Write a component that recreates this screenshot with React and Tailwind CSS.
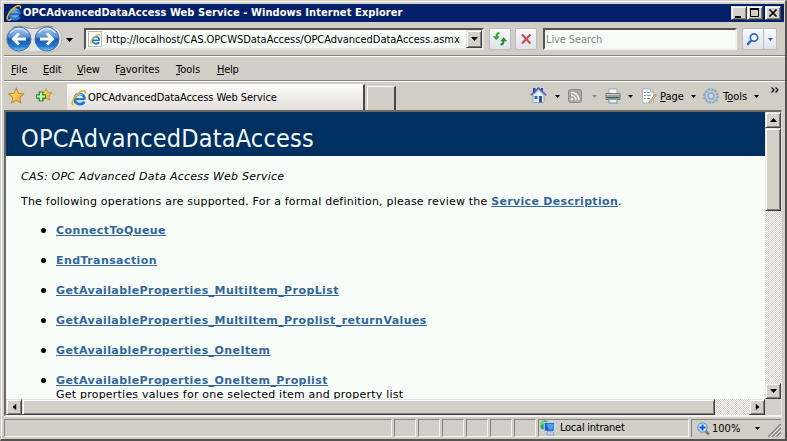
import React from "react";

const ui = "font-['DejaVu_Sans_Condensed','DejaVu_Sans',sans-serif] [font-stretch:condensed]";
const raised =
  "bg-[#d3d0c8] border border-t-[#e4e2dc] border-l-[#e4e2dc] border-r-[#404040] border-b-[#404040] shadow-[inset_1px_1px_0_#fff,inset_-1px_-1px_0_#808080]";
const dither = "bg-[repeating-conic-gradient(#fff_0_25%,#d4d0c8_0_50%)] bg-[length:2px_2px]";

function IELogo({ size = 16, className = "" }) {
  return (
    <svg width={size} height={size} viewBox="0 0 16 16" className={"shrink-0 " + className}>
      <circle cx="8.600" cy="9" r="4.700" fill="#d8f0ff" opacity=".6" />
      <path d="M4 9.200h9.400" stroke="#1769c8" strokeWidth="1.900" />
      <path d="M13.300 11.600C11.600 14.900 6.200 15 4.300 11.800C2.400 8.200 4.600 4 8.700 4C11.800 4 13.500 6.100 13.400 9.400" fill="none" stroke="#1d78d8" strokeWidth="2.700" />
      <path d="M4.600 6.800C5.800 4.400 9 3.300 11.500 4.800" fill="none" stroke="#6cc4ff" strokeWidth="1.200" />
      <path d="M2.200 14.800C-.6 12.800 4 4.600 9.600 1.700C12.600 .1 15.200.2 14.200 3.600" fill="none" stroke="#e9b320" strokeWidth="1.600" />
      <path d="M2.200 14.800C3.200 15.400 4.400 14.800 5.400 14" fill="none" stroke="#f7dc6a" strokeWidth="1.200" />
    </svg>
  );
}

function Caret({ className = "", color = "#000", w = 5 }) {
  return (
    <svg width={w} height={(w + 1) / 2} viewBox="0 0 10 6" preserveAspectRatio="none" className={"shrink-0 " + className}>
      <path d="M0 0h10L5 6z" fill={color} />
    </svg>
  );
}

function NavButtons() {
  return (
    <svg width="60" height="30" viewBox="0 0 60 30" className="shrink-0">
      <defs>
        <linearGradient id="orb" x1="0" y1="0" x2="0" y2="1">
          <stop offset="0" stopColor="#b4cfee" />
          <stop offset=".42" stopColor="#5590d8" />
          <stop offset=".5" stopColor="#165ab0" />
          <stop offset=".8" stopColor="#2478d0" />
          <stop offset="1" stopColor="#74d0fa" />
        </linearGradient>
      </defs>
      <rect x="1" y="1" width="56" height="26" rx="13" fill="#e2e1df" stroke="#b9babb" />
      <path d="M8 2q6-1.500 12 0q8 3 16 0q6-1.500 12 0" fill="none" stroke="#8d8f92" strokeWidth="1.200" />
      {[14, 42].map((x) => (
        <g key={x}>
          <circle cx={x} cy="14" r="12" fill="url(#orb)" stroke="#4a70a2" strokeWidth="1" />
          <path d={`M${x - 9} 8Q${x} -1 ${x + 9} 8`} fill="none" stroke="#e3eefa" strokeWidth="1.200" opacity=".8" />
        </g>
      ))}
      <path d="M21 14H9M14 8.500L8.500 14L14 19.500" fill="none" stroke="#fff" strokeWidth="3" />
      <path d="M35 14h12M42 8.500L47.500 14L42 19.500" fill="none" stroke="#fff" strokeWidth="3" />
    </svg>
  );
}

function TitleBar() {
  return (
    <div className="h-[18px] bg-[#04206a] flex items-center pl-[2px] pr-[3px] mr-[1px]">
      <IELogo />
      <span className="ml-[1px] text-white font-bold text-[11px] leading-[18px] whitespace-nowrap tracking-[0.08px]">
        OPCAdvancedDataAccess Web Service - Windows Internet Explorer
      </span>
      <div className="ml-auto flex">
        <div className={"w-4 h-[14px] " + raised}>
          <svg width="14" height="12"><path d="M3 9h6v2H3z" /></svg>
        </div>
        <div className={"w-4 h-[14px] " + raised}>
          <svg width="14" height="12"><path d="M2.500 2.500h8v7h-8z" fill="none" stroke="#000" /><path d="M2 1h9v2H2z" /></svg>
        </div>
        <div className={"ml-[2px] w-4 h-[14px] " + raised}>
          <svg width="14" height="12"><path d="M3.500 2.500l7 7M10.500 2.500l-7 7" stroke="#000" strokeWidth="1.700" /></svg>
        </div>
      </div>
    </div>
  );
}

const glass =
  "border border-[#b9bcc2] rounded-[2px] bg-gradient-to-b from-[#fbfbfc] via-[#eceef2] to-[#dfe3ea] flex items-center justify-center";

function AddressRow() {
  return (
    <div className="h-[33px] flex items-start text-[11px]">
      <div className="pl-[1px] pt-[3px]"><NavButtons /></div>
      <Caret w={7} className="mt-[16px] ml-[1px]" />
      <div className="ml-[11px] mt-[6px] w-[400px] h-[22px] border-2 border-t-[#55534e] border-l-[#55534e] border-r-[#e8e6e0] border-b-[#e8e6e0] bg-[#f8fdf9] flex items-center">
        <div className="ml-[2px] w-[14px] h-[16px] border border-[#b9b9b0] bg-white flex items-center justify-center"><IELogo size={11} /></div>
        <span className="ml-[4px] pt-[1px] leading-4 tracking-[-0.03px] whitespace-nowrap text-black">http://localhost/CAS.OPCWSDataAccess/OPCAdvancedDataAccess.asmx</span>
        <div className={"ml-auto shrink-0 w-4 h-[18px] flex items-center justify-center " + raised}><Caret w={7} /></div>
      </div>
      <div className={"ml-[5px] mt-[6px] w-[22px] h-[22px] " + glass}>
        <svg width="16" height="16" viewBox="0 0 16 16">
          <path d="M7.500 2Q4.500 2 4.500 6" fill="none" stroke="#35a23a" strokeWidth="2" />
          <path d="M.8 5.200h7L4.300 9.300z" fill="#35a23a" />
          <path d="M8.500 13.500Q11.500 13.500 11.500 10" fill="none" stroke="#258a2b" strokeWidth="2" />
          <path d="M8.200 10.300h7L11.700 6.200z" fill="#258a2b" />
        </svg>
      </div>
      <div className={"ml-[4px] mt-[6px] w-[22px] h-[22px] " + glass}>
        <svg width="12" height="12" viewBox="0 0 12 12"><path d="M2 1.500l8.500 9M10.500 1.500L2 10.500" stroke="#cc4d55" strokeWidth="2.200" /></svg>
      </div>
      <div className="ml-[6px] mt-[6px] w-[194px] h-[22px] border-2 border-t-[#55534e] border-l-[#55534e] border-r-[#f4f3f0] border-b-[#f4f3f0] bg-[#f8fdf9] flex items-center">
        <span className="ml-[1px] pt-[1px] leading-4 tracking-[-0.1px] text-[#858585]">Live Search</span>
      </div>
      <div className={"ml-[5px] mt-[6px] w-[35px] h-[22px] " + glass}>
        <div className="w-[21px] h-full flex items-center justify-center border-r border-[#b9bcc2]">
          <svg width="14" height="14" viewBox="0 0 14 14">
            <path d="M5.500 8L2 12" stroke="#2c63cf" strokeWidth="2.400" strokeLinecap="round" />
            <circle cx="8" cy="5.500" r="3.700" fill="#eef5ff" stroke="#2c63cf" strokeWidth="1.700" />
          </svg>
        </div>
        <div className="flex-1 flex justify-center"><Caret color="#2c63c0" /></div>
      </div>
    </div>
  );
}

function MenuBar() {
  return (
    <div className="h-[25px] border-t border-[#868480] shadow-[inset_0_1px_0_#fff] text-[11px] leading-[27px] flex text-black">
      <span className="ml-[7px] w-[32px]"><u>F</u>ile</span>
      <span className="w-[34px] tracking-[-0.2px]"><u>E</u>dit</span>
      <span className="w-[38px] tracking-[-0.2px]"><u>V</u>iew</span>
      <span className="w-[61px]">F<u>a</u>vorites</span>
      <span className="w-[41px]"><u>T</u>ools</span>
      <span className="tracking-[-0.3px]"><u>H</u>elp</span>
    </div>
  );
}

const star = "M8 .8l2.100 4.700 5.100.6-3.700 3.600.9 5.200L8 12.400l-4.400 2.500.9-5.200L.8 6.100l5.100-.6z";

function Star({ plus }) {
  return (
    <svg width="17" height="17" viewBox="0 0 17 17" className="shrink-0">
      <defs>
        <linearGradient id="gold" x1="0" y1="0" x2="1" y2="1">
          <stop offset="0" stopColor="#ffe98a" />
          <stop offset="1" stopColor="#f3a31c" />
        </linearGradient>
      </defs>
      <path d={star} fill="url(#gold)" stroke="#b98a3a" strokeWidth="1" transform={plus ? "translate(3.500 1) scale(.82)" : "translate(0 .5) scale(1.03)"} />
      {plus && (
        <g>
          <path d="M5 4.500v10M0 9.500h10" stroke="#238a2b" strokeWidth="4.600" />
          <path d="M5 5.500v8M1 9.500h8" stroke="#c8f7b0" strokeWidth="2.200" />
        </g>
      )}
    </svg>
  );
}

function Home() {
  return (
    <svg width="17" height="16" viewBox="0 0 17 16" className="shrink-0">
      <path d="M3 1h2.500v5H3zM11 1h2v3h-2z" fill="#33439f" />
      <path d="M3 8L8.500 3L14 8v7.500H3z" fill="#e3effb" stroke="#8aa6c8" />
      <path d="M.7 8.300L8.500 1L16.300 8.300" fill="none" stroke="#4660b6" strokeWidth="1.500" />
      <path d="M4.500 9h3v3h-3z" fill="#3d6699" /><path d="M9 9h3v6.500H9z" fill="#2c598f" />
    </svg>
  );
}
function Feed() {
  return (
    <svg width="14" height="14" viewBox="0 0 14 14" className="shrink-0">
      <rect x=".5" y=".5" width="13" height="13" rx="2" fill="#a6a6a4" stroke="#8c8c8a" />
      <circle cx="4" cy="10.200" r="1.200" fill="#f3f3f1" />
      <path d="M3 6.300a5 5 0 015 5M3 3.200a8 8 0 018 8" fill="none" stroke="#f3f3f1" strokeWidth="1.500" />
    </svg>
  );
}
function Printer() {
  return (
    <svg width="16" height="16" viewBox="0 0 16 16" className="shrink-0">
      <path d="M4 .8h8v6H4z" fill="#f3f5f6" stroke="#a3a8ab" />
      <path d="M1 5.500h14v6H1z" fill="#9a9ea1" stroke="#74797c" />
      <path d="M1.500 6.500h13" stroke="#c5c9cb" /><path d="M2 9.500h12" stroke="#53575a" />
      <path d="M4 10.500h8v4.500H4z" fill="#e6f4f0" stroke="#7e8c8c" /><path d="M4.500 11.500h7" stroke="#58bcb0" />
    </svg>
  );
}
function PageIcon() {
  return (
    <svg width="16" height="16" viewBox="0 0 16 16" className="shrink-0">
      <path d="M1.500 1h8l3 3v11h-11z" fill="#fbfcfe" stroke="#a9b1bc" />
      <path d="M9.500 1v3h3" fill="none" stroke="#a9b1bc" />
      <path d="M3 4.500h2M6 4.500h3M3 7.500h2M6 7.500h4M3 10.500h2M6 10.500h3" stroke="#86a2c8" />
      <path d="M14.500 6L9 12.500l-1 2.300 2.200-1L15.500 7z" fill="#e6cd78" stroke="#a08c4c" strokeWidth=".8" />
    </svg>
  );
}
function Gear() {
  return (
    <svg width="16" height="16" viewBox="0 0 16 16" className="shrink-0">
      <circle cx="8" cy="8" r="6.900" fill="none" stroke="#86a0b8" strokeWidth="1.800" strokeDasharray="2.400 1.210" />
      <circle cx="8" cy="8" r="4.600" fill="none" stroke="#9fb8cd" strokeWidth="3.600" />
      <circle cx="8" cy="8" r="2.700" fill="#d5d6d3" stroke="#7d97ae" strokeWidth=".8" />
      <circle cx="8" cy="8" r="4.700" fill="none" stroke="#c3d6e4" strokeWidth=".9" />
    </svg>
  );
}

function TabRow() {
  return (
    <div className="h-[30px] border-t border-[#868480] shadow-[inset_0_1px_0_#fff] flex items-start text-[11px] text-black">
      <div className="mt-[6px] ml-[4px]"><Star /></div>
      <div className="mt-[6px] ml-[11px]"><Star plus /></div>
      <div className="ml-[14px] mt-[3px] w-[298px] h-[26px] bg-gradient-to-b from-[#fbfbfa] to-[#e2e0db] border-r-2 border-[#4b4a47] border-t border-t-white flex items-center">
        <IELogo className="ml-[4px]" />
        <span className="ml-[1px] pt-[2px] tracking-[-0.08px] whitespace-nowrap">OPCAdvancedDataAccess Web Service</span>
      </div>
      <div className="ml-[2px] mt-[5px] w-[29px] h-[24px] border border-b-0 border-t-white border-l-white border-r-[#4b4a47] border-r-2 rounded-tl-[1px]" />
      <div className="ml-[134px] mt-[6px]"><Home /></div>
      <Caret className="mt-[14px] ml-[8px]" />
      <div className="mt-[8px] ml-[8px]"><Feed /></div>
      <Caret className="mt-[14px] ml-[10px]" color="#8b8984" />
      <div className="mt-[7px] ml-[8px]"><Printer /></div>
      <Caret className="mt-[14px] ml-[7px]" />
      <div className="mt-[7px] ml-[8px]"><PageIcon /></div>
      <span className="ml-[3px] mt-[6px] w-[25px] whitespace-nowrap leading-[19px]"><u>P</u>age</span>
      <Caret className="mt-[14px] ml-[6px]" />
      <div className="mt-[7px] ml-[7px]"><Gear /></div>
      <span className="ml-[4px] mt-[6px] w-[25px] whitespace-nowrap leading-[19px]">T<u>o</u>ols</span>
      <Caret className="mt-[14px] ml-[6px]" />
      <svg width="8" height="6" viewBox="0 0 8 6" className="mt-[6px] ml-[12px] shrink-0">
        <path d="M.5.500L3 3L.5 5.500M4.500.500L7 3L4.500 5.500" fill="none" stroke="#000" strokeWidth="1.300" />
      </svg>
    </div>
  );
}

const operations = [
  { name: "ConnectToQueue" },
  { name: "EndTransaction" },
  { name: "GetAvailableProperties_MultiItem_PropList" },
  { name: "GetAvailableProperties_MultiItem_Proplist_returnValues" },
  { name: "GetAvailableProperties_OneItem" },
  {
    name: "GetAvailableProperties_OneItem_Proplist",
    note: "Get properties values for one selected item and property list",
  },
];

function Document() {
  return (
    <div className="flex-1 h-[287px] overflow-hidden bg-[#f8fdf9] font-['DejaVu_Sans',sans-serif] [font-stretch:normal] text-black">
      <div className="h-[44px] bg-[#003060] pl-[15px] pt-[11px] text-[#f4fbff] text-[25px] leading-[32px] tracking-[0.2px] whitespace-nowrap font-['DejaVu_Sans_Condensed','DejaVu_Sans',sans-serif] [font-stretch:condensed]">
        OPCAdvancedDataAccess
      </div>
      <p className="ml-[15px] mt-[13px] text-[11px] leading-[16px] italic whitespace-nowrap tracking-[0.23px]">CAS: OPC Advanced Data Access Web Service</p>
      <p className="ml-[15px] mt-[9px] text-[11px] leading-[16px] whitespace-nowrap tracking-[0.21px]">
        The following operations are supported. For a formal definition, please review the{" "}
        <b className="text-[#336699] underline tracking-[0.32px]">Service Description</b>.
      </p>
      <ul className="mt-[13px] ml-[35px]">
        {operations.map(({ name, note }) => (
          <li key={name} className="h-[30px] flex items-start">
            <i className="block w-[5px] h-[5px] rounded-full bg-black mt-[5px] mr-[10px]" />
            <div className="text-[11px] leading-[14px] pt-[1px] whitespace-nowrap tracking-[0.22px]">
              <b className="text-[#336699] underline tracking-[0.42px]">{name}</b>
              {note && <div>{note}</div>}
            </div>
          </li>
        ))}
      </ul>
    </div>
  );
}

function VScroll() {
  return (
    <div className={"w-4 h-[287px] flex flex-col " + dither}>
      <div className={"h-4 flex items-center justify-center " + raised}><Caret w={7} className="rotate-180" /></div>
      <div className={"h-[83px] " + raised} />
      <div className={"mt-auto h-4 flex items-center justify-center " + raised}><Caret w={7} /></div>
    </div>
  );
}
function HScroll() {
  return (
    <div className="h-4 flex bg-[#d3d0c8]">
      <div className={"w-[759px] flex " + dither}>
        <div className={"w-4 flex items-center justify-center " + raised}><Caret w={7} className="rotate-90" /></div>
        <div className={"w-[693px] " + raised} />
        <div className={"ml-auto w-4 flex items-center justify-center " + raised}><Caret w={7} className="-rotate-90" /></div>
      </div>
    </div>
  );
}

const panel = "h-[18px] border border-t-[#85837e] border-l-[#85837e] border-r-[#f6f5f2] border-b-[#f6f5f2] flex items-center";

function StatusBar() {
  return (
    <div className="flex pt-[3px] gap-[2px] text-[11px] text-black">
      <div className={"w-[388px] " + panel} />
      {[0, 1, 2, 3, 4, 5].map((i) => <div key={i} className={"w-[22px] " + panel} />)}
      <div className={"w-[151px] " + panel}>
        <svg width="17" height="16" viewBox="0 0 17 17" className="shrink-0">
          <circle cx="5.500" cy="5.500" r="5" fill="#2f9a6b" /><path d="M1 7C3 3 6 5 5 1C0 1 0 5 1 7" fill="#79dd72" />
          <rect x="5" y="2.500" width="11" height="9.500" rx="1" fill="#2359c4" stroke="#dfe9f5" />
          <path d="M7 4h8v6H10z" fill="#3fa5f4" />
          <path d="M8 12.500h6l1.500 3.500H8z" fill="#c9d7e9" stroke="#718db4" strokeWidth=".8" />
        </svg>
        <span className="ml-[4px] pt-[1px] tracking-[-0.25px] whitespace-nowrap">Local intranet</span>
      </div>
      <div className="w-[90px] h-[18px] flex items-center border-l border-t border-[#85837e] shrink-0">
        <svg width="13" height="14" viewBox="0 0 13 14" className="ml-[5px] shrink-0">
          <path d="M8 8.500l4 4" stroke="#9c734c" strokeWidth="2.500" />
          <circle cx="5.500" cy="5.500" r="4.700" fill="#d6eaff" stroke="#5c97d6" strokeWidth="1.200" />
          <path d="M5.500 2.500v6M2.500 5.500h6" stroke="#1c5bc2" strokeWidth="2" />
        </svg>
        <span className="ml-[2px] pt-[1px] w-[28px] whitespace-nowrap">100%</span>
        <Caret className="ml-[15px]" />
        <svg width="13" height="13" viewBox="0 0 13 13" className="mt-[4px] ml-auto shrink-0">
          <path d="M0 13L13 0M4 13L13 4M8 13L13 8" stroke="#85837e" strokeWidth="1.400" />
          <path d="M2 13L13 2M6 13L13 6M10 13L13 10" stroke="#fff" strokeWidth=".8" />
        </svg>
      </div>
    </div>
  );
}

export default function App() {
  return (
    <div className={"w-[787px] h-[441px] overflow-hidden bg-[#d1cec6] border-r-2 border-b-2 border-r-[#55534f] border-b-[#55534f] border-l border-t border-l-[#d1cec6] border-t-[#d1cec6] " + ui}>
      <div className="h-full border-l border-t border-white pl-[2px] pt-[2px]">
        <TitleBar />
        <AddressRow />
        <MenuBar />
        <TabRow />
        <div className="mr-[3px] border-t-2 border-l-2 border-t-[#6b6964] border-l-[#6b6964] border-r border-r-[#e6e4de] border-b border-b-[#f4f3f0] shadow-[0_1px_0_#f4f3f0]">
          <div className="flex">
            <Document />
            <VScroll />
          </div>
          <HScroll />
        </div>
        <StatusBar />
      </div>
    </div>
  );
}
